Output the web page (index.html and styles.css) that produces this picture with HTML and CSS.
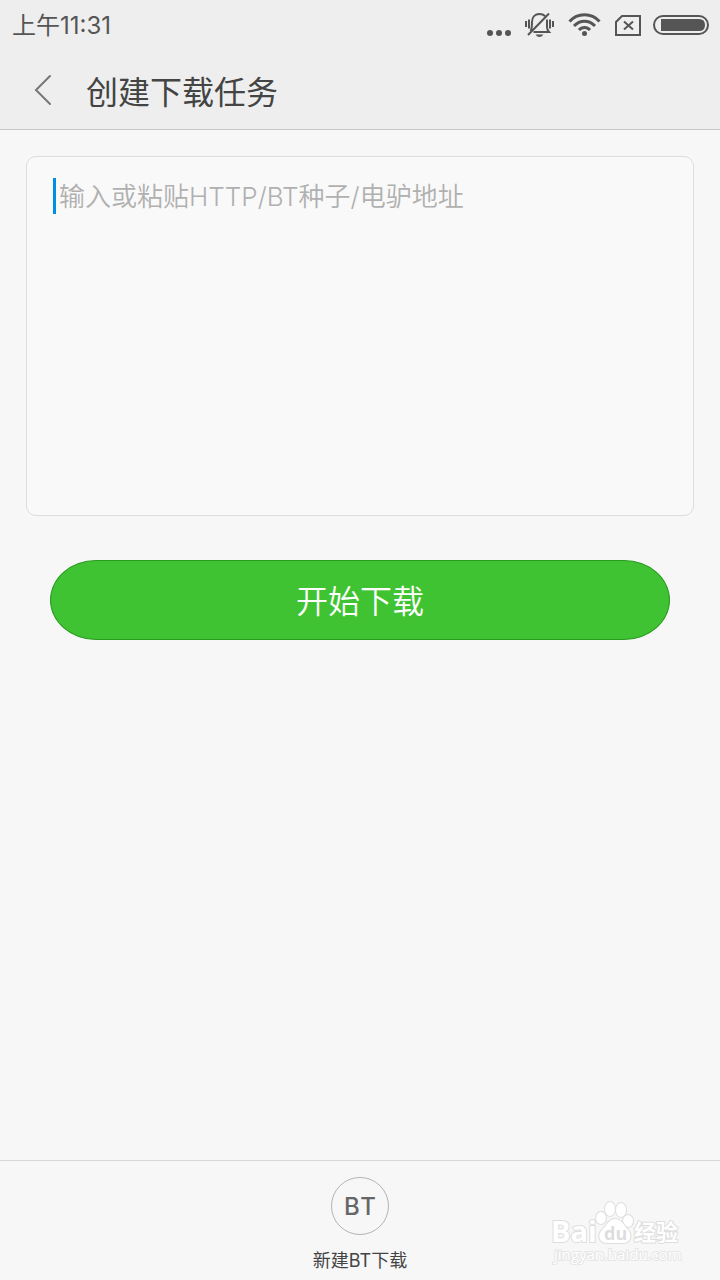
FILE: index.html
```html
<!DOCTYPE html>
<html lang="zh-CN">
<head>
    <meta charset="UTF-8">
    <meta name="viewport" content="width=device-width, initial-scale=1.0">
    <title>创建下载任务</title>
    <link rel="stylesheet" href="styles.css">
</head>
<body>
    <header class="top">
        <div class="status-bar">
            <span class="time">上午11:31</span>
            <div class="status-icons">
                <svg class="dots" width="26" height="36" viewBox="0 0 26 36">
                    <circle cx="5" cy="25" r="3"/>
                    <circle cx="14" cy="25" r="3"/>
                    <circle cx="23" cy="25" r="3"/>
                </svg>
                <svg class="bell" width="30" height="36" viewBox="0 0 30 36">
                    <path d="M6.500 23C8 21 8 18 8 14C8 9 11 6 15.500 6C17.500 6 19.500 6.500 21 8M23 11.500V19C23 21.500 23.500 22.500 25 24H9.500M4 27L25 5.500"/>
                    <path d="M2 13V19M5 11.500V20.500M26 11.500V20.500M29 13V19"/>
                    <path class="solid" d="M11.500 26.500H19.500Q17.500 29 15.500 29Q13 29 11.500 26.500Z"/>
                </svg>
                <svg class="wifi" width="34" height="36" viewBox="0 0 34 36">
                    <path d="M2.500 13.500C10.500 4.500 24.500 4.500 32.500 13.500M7 18C13 11.500 22 11.500 28 18M12 22C15 18.500 20 18.500 23 22"/>
                    <circle cx="17.500" cy="25.500" r="2.500"/>
                </svg>
                <svg class="sim" width="26" height="36" viewBox="0 0 26 36">
                    <path d="M8 8H26V27H2V14Z"/>
                    <path d="M10 13.500L19 21.500M19 13.500L10 21.500"/>
                </svg>
                <svg class="battery" width="56" height="36" viewBox="0 0 56 36">
                    <rect x="1" y="8" width="54" height="18" rx="9"/>
                    <path class="solid" d="M8 11H46Q52 11 52 17Q52 23 46 23H8Z"/>
                </svg>
            </div>
        </div>
        <div class="title-bar">
            <button class="back" type="button" aria-label="返回">
                <svg width="20" height="32" viewBox="0 0 20 32">
                    <path d="M17 2L3 16L17 30"/>
                </svg>
            </button>
            <h1>创建下载任务</h1>
        </div>
    </header>

    <main>
        <form class="task-form">
            <div class="address-box">
                <textarea class="address" aria-label="下载地址" placeholder="输入或粘贴HTTP/BT种子/电驴地址"></textarea>
                <span class="cursor"></span>
            </div>
            <button class="start" type="button">开始下载</button>
        </form>
    </main>

    <footer class="bottom-bar">
        <button class="new-bt" type="button">
            <span class="bt-icon">BT</span>
            <span class="bt-label">新建BT下载</span>
        </button>
        <svg class="watermark" width="140" height="70" viewBox="0 0 140 70">
            <text class="brand" x="9" y="42">Bai</text>
            <g class="paw">
                <ellipse cx="59" cy="18" rx="5" ry="6"/>
                <ellipse cx="68" cy="9" rx="5" ry="7"/>
                <ellipse cx="79" cy="10" rx="5" ry="7"/>
                <ellipse cx="86" cy="21" rx="5" ry="6"/>
                <path d="M73 19C79 19 82 25 86 30C91 36 88 43 81 43C76 43 70 43 65 43C57 43 55 35 60 30C65 25 67 19 73 19Z"/>
            </g>
            <text class="du" x="62" y="40">du</text>
            <text class="brand-cn" x="92" y="40">经验</text>
            <text class="site" x="12" y="60">jingyan.baidu.com</text>
        </svg>
    </footer>
</body>
</html>
```

FILE: styles.css
```css
* {
    margin: 0;
    padding: 0;
    box-sizing: border-box;
}

body {
    display: flex;
    flex-direction: column;
    min-height: 100vh;
    background-color: #f7f7f7;
    font-family: "Noto Sans CJK SC", sans-serif;
    color: #444;
}

button {
    border: none;
    background: none;
    font-family: inherit;
    cursor: pointer;
}

svg {
    display: block;
    overflow: visible;
}

.top {
    background-color: #eee;
    border-bottom: 1px solid #c8c8c8;
}

.status-bar {
    display: flex;
    justify-content: space-between;
    align-items: center;
    height: 52px;
    padding: 0 11px 0 12px;
}

.time {
    font-family: Inter, "Noto Sans CJK SC", sans-serif;
    font-size: 24px;
    line-height: 36px;
    color: #555;
}

.status-icons {
    display: flex;
    gap: 13px;
    fill: #555;
}

.bell,
.wifi,
.sim,
.battery {
    fill: none;
    stroke: #555;
    stroke-width: 2;
}

.wifi {
    stroke-width: 3;
}

.wifi circle,
.solid {
    fill: #555;
    stroke: none;
}

.title-bar {
    display: flex;
    align-items: center;
    gap: 33px;
    height: 77px;
    padding: 0 33px 2px;
}

.back svg {
    fill: none;
    stroke: #777;
    stroke-width: 2;
    stroke-linecap: round;
}

h1 {
    font-size: 32px;
    line-height: 48px;
    font-weight: 400;
}

main {
    flex: 1;
    padding: 26px;
}

.address-box {
    position: relative;
}

.address {
    display: block;
    width: 100%;
    height: 360px;
    padding: 20px 32px;
    border: 1px solid #ddd;
    border-radius: 10px;
    outline: none;
    resize: none;
    background-color: #f9f9f9;
    font-family: Inter, "Noto Sans CJK SC", sans-serif;
    font-size: 26px;
    font-weight: 350;
    line-height: 40px;
    color: #444;
}

.address::placeholder {
    color: #b0b0b0;
}

.cursor {
    position: absolute;
    top: 22px;
    left: 27px;
    width: 3px;
    height: 36px;
    background-color: #0090e0;
}

.start {
    display: block;
    width: calc(100% - 48px);
    height: 80px;
    margin: 44px auto 0;
    padding-bottom: 2px;
    border: 1px solid #2a9a20;
    border-radius: 46px / 40px;
    background-color: #3fc333;
    font-size: 32px;
    font-weight: 350;
    line-height: 48px;
    color: #fff;
}

.bottom-bar {
    position: relative;
    display: flex;
    justify-content: center;
    height: 120px;
    padding-top: 16px;
    border-top: 1px solid #d8d8d8;
}

.new-bt {
    display: flex;
    flex-direction: column;
    align-items: center;
    gap: 12px;
}

.bt-icon {
    width: 58px;
    height: 58px;
    border: 1px solid #b4b4b4;
    border-radius: 50%;
    font-family: Inter, sans-serif;
    font-size: 24px;
    font-weight: 500;
    line-height: 58px;
    letter-spacing: 2px;
    text-indent: 2px;
    color: #666;
}

.bt-label {
    font-family: Inter, "Noto Sans CJK SC", sans-serif;
    font-size: 18px;
    line-height: 28px;
    color: #444;
}

.watermark {
    position: absolute;
    right: 38px;
    bottom: 10px;
    fill: #fff;
    stroke: #dedede;
    stroke-width: 2;
    paint-order: stroke;
    font-family: "Open Sans", "Noto Sans CJK SC", sans-serif;
    font-weight: 700;
}

.brand {
    font-size: 29px;
}

.du {
    fill: #ddd;
    stroke: none;
    font-size: 18px;
}

.brand-cn {
    font-size: 22px;
}

.site {
    font-size: 15px;
    font-weight: 400;
    stroke: #e6e6e6;
}
```
